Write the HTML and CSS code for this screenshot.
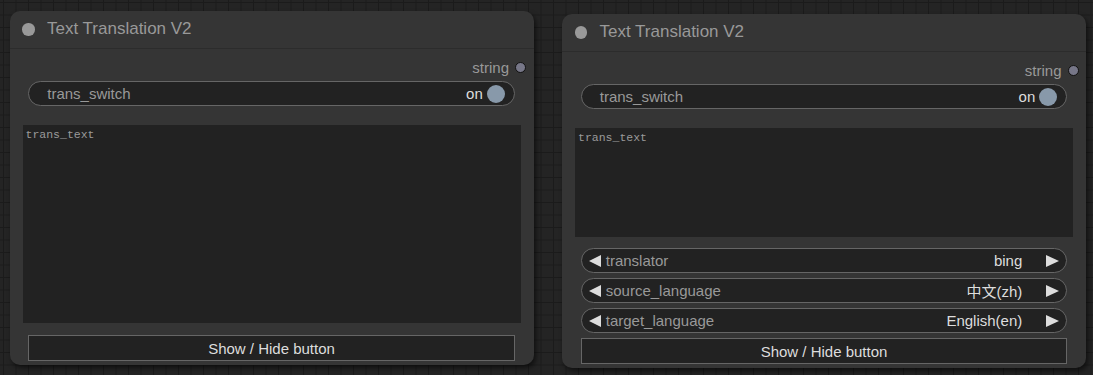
FILE: index.html
```html
<!DOCTYPE html>
<html>
<head>
<meta charset="utf-8">
<link rel="stylesheet" href="styles.css">
</head>
<body>
<div class="canvas">
  <div class="node node-a">
    <div class="title"><span class="title-dot"></span><span class="title-text">Text Translation V2</span></div>
    <div class="outputs"><span class="out-label">string</span><span class="out-dot"></span></div>
    <div class="widget toggle"><span class="w-label">trans_switch</span><span class="w-value">on</span><span class="knob"></span></div>
    <textarea class="text tall" placeholder="trans_text"></textarea>
    <div class="button">Show / Hide button</div>
  </div>

  <div class="node node-b">
    <div class="title"><span class="title-dot"></span><span class="title-text">Text Translation V2</span></div>
    <div class="outputs"><span class="out-label">string</span><span class="out-dot"></span></div>
    <div class="widget toggle"><span class="w-label">trans_switch</span><span class="w-value">on</span><span class="knob"></span></div>
    <textarea class="text short" placeholder="trans_text"></textarea>
    <div class="combos">
      <div class="widget combo"><span class="arr left"></span><span class="w-label">translator</span><span class="w-value">bing</span><span class="arr right"></span></div>
      <div class="widget combo"><span class="arr left"></span><span class="w-label">source_language</span><span class="w-value">中文(zh)</span><span class="arr right"></span></div>
      <div class="widget combo"><span class="arr left"></span><span class="w-label">target_language</span><span class="w-value">English(en)</span><span class="arr right"></span></div>
    </div>
    <div class="button">Show / Hide button</div>
  </div>
</div>
</body>
</html>
```

FILE: styles.css
```css
html, body {
  margin: 0;
  padding: 0;
}
body {
  width: 1093px;
  height: 375px;
  overflow: hidden;
  font-family: "Liberation Sans", Arial, "Noto Sans CJK SC", sans-serif;
  background-color: #242424;
  background-image:
    linear-gradient(to right, #1b1b1b 1px, transparent 1px),
    linear-gradient(to bottom, #1b1b1b 1px, transparent 1px);
  background-size: 12.5px 12.5px;
  background-position: 3px 2px;
}
.canvas {
  position: relative;
  width: 1093px;
  height: 375px;
}
.node {
  position: absolute;
  width: 524px;
  height: 354px;
  box-sizing: border-box;
  background: #353535;
  border-radius: 10px;
  display: flex;
  flex-direction: column;
  box-shadow: 2px 3px 5px rgba(0, 0, 0, 0.55);
}
.node-a { left: 9.5px; top: 11px; }
.node-b { left: 562px; top: 14px; }

.title {
  height: 37.5px;
  box-sizing: border-box;
  border-bottom: 1px solid #2c2c2c;
  display: flex;
  align-items: center;
  padding-left: 12.5px;
  gap: 12.5px;
  flex: none;
}
.title-dot {
  width: 12.5px;
  height: 12.5px;
  border-radius: 50%;
  background: #999;
  flex: none;
}
.title-text {
  color: #999;
  font-size: 17px;
}

.outputs {
  height: 20px;
  margin-top: 8.5px;
  padding-right: 7.5px;
  display: flex;
  justify-content: flex-end;
  align-items: center;
  gap: 6px;
  flex: none;
}
.out-label {
  color: #999;
  font-size: 15px;
}
.out-dot {
  width: 9px;
  height: 9px;
  border-radius: 50%;
  background: #778;
  border: 1px solid #111;
}

.widget {
  height: 25px;
  box-sizing: border-box;
  margin: 0 18.75px;
  background: #222;
  border: 1px solid #666;
  border-radius: 13px;
  display: flex;
  align-items: center;
  font-size: 15px;
  flex: none;
}
.w-label {
  color: #999;
  flex: 1;
  white-space: nowrap;
}
.w-value {
  color: #ddd;
  white-space: nowrap;
}
.toggle {
  margin-top: 4px;
  padding-left: 18px;
  padding-right: 9px;
}
.knob {
  width: 18px;
  height: 18px;
  border-radius: 50%;
  background: #89a;
  margin-left: 4px;
  flex: none;
}

.text {
  display: block;
  margin: 19px 0 0 13px;
  width: 498px;
  box-sizing: border-box;
  background: #222;
  border: none;
  outline: none;
  resize: none;
  padding: 3px 3px;
  font-family: "Liberation Mono", "DejaVu Sans Mono", monospace;
  font-size: 11.5px;
  color: #ccc;
  flex: none;
}
.text::placeholder {
  color: #9a9a9a;
  opacity: 1;
}
.tall { height: 198px; }
.short { height: 109px; }

.combos {
  margin-top: 11px;
  display: flex;
  flex-direction: column;
  gap: 5px;
  flex: none;
}
.combo {
  padding-left: 7px;
  padding-right: 7px;
}
.combo .w-label {
  margin-left: 5px;
}
.combo .w-value {
  margin-right: 24px;
}
.arr {
  width: 0;
  height: 0;
  border-top: 6px solid transparent;
  border-bottom: 6px solid transparent;
  flex: none;
}
.arr.left { border-right: 12px solid #ddd; }
.arr.right { border-left: 13px solid #ddd; }

.button {
  margin: 12px 18.75px 0;
  height: 26px;
  box-sizing: border-box;
  background: #222;
  border: 1px solid #666;
  color: #ddd;
  font-size: 15px;
  display: flex;
  align-items: center;
  justify-content: center;
  flex: none;
}
.node-b .button { margin-top: 5px; }
```
